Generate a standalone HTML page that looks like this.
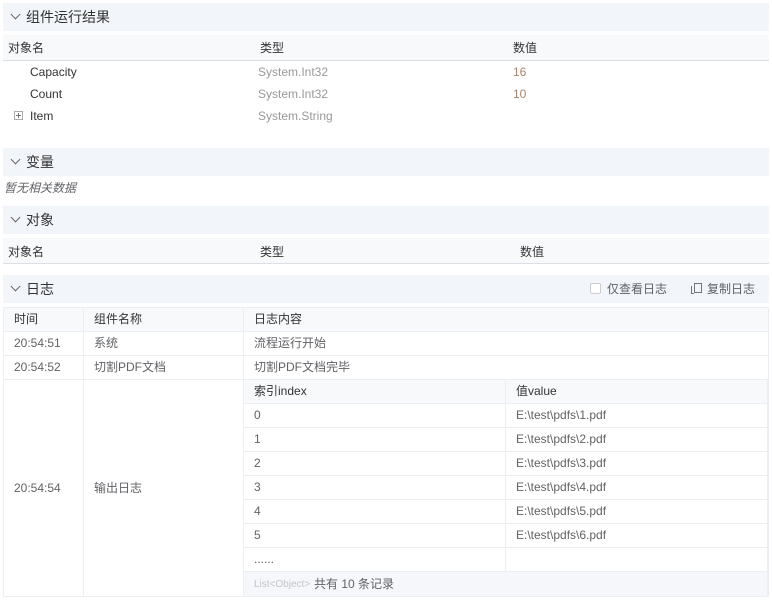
<!DOCTYPE html>
<html><head><meta charset="utf-8"><style>
*{margin:0;padding:0;box-sizing:border-box}
body{width:772px;height:601px;background:#fff;font-family:"Liberation Sans","Noto Sans CJK SC",sans-serif;font-size:12px;color:#333;position:relative;overflow:hidden}
.a{position:absolute;white-space:nowrap;line-height:14px}
.hd{position:absolute;left:3px;width:766px;height:28px;background:#f2f5fa}
.hd span{position:absolute;left:23px;top:6px;font-size:14px;color:#333;line-height:16px}
.hd i{position:absolute;left:9px;top:8px;width:7px;height:7px;border-right:1px solid #666;border-bottom:1px solid #666;transform:rotate(45deg)}
.th{position:absolute;left:3px;width:766px;height:26px;background:#f7f9fa;border-bottom:1px solid #dcdfe6}
.g{color:#999}.b{color:#a3866e}.c{color:#606266}
.bx{position:absolute;border:1px solid #ebeef5}
.hl{position:absolute;height:1px;background:#ebeef5}
.vl{position:absolute;width:1px;background:#ebeef5}
</style></head><body>
<div class="hd" style="top:3px"><i></i><span>组件运行结果</span></div>
<div class="th" style="top:35px"></div>
<div class="a" style="left:8px;top:41px">对象名</div>
<div class="a" style="left:260px;top:41px">类型</div>
<div class="a" style="left:513px;top:41px">数值</div>
<div class="a" style="left:30px;top:65px">Capacity</div>
<div class="a g" style="left:258px;top:65px">System.Int32</div>
<div class="a b" style="left:513px;top:65px">16</div>
<div class="a" style="left:30px;top:87px">Count</div>
<div class="a g" style="left:258px;top:87px">System.Int32</div>
<div class="a b" style="left:513px;top:87px">10</div>
<div style="position:absolute;left:14px;top:111px;width:9px;height:9px;border:1px solid #aaa"></div>
<div style="position:absolute;left:16px;top:115px;width:5px;height:1px;background:#777"></div>
<div style="position:absolute;left:18px;top:113px;width:1px;height:5px;background:#777"></div>
<div class="a" style="left:30px;top:109px">Item</div>
<div class="a g" style="left:258px;top:109px">System.String</div>

<div class="hd" style="top:148px"><i></i><span>变量</span></div>
<div class="a c" style="left:4px;top:181px;font-style:italic">暂无相关数据</div>

<div class="hd" style="top:206px"><i></i><span>对象</span></div>
<div class="th" style="top:238px"></div>
<div class="a" style="left:8px;top:245px">对象名</div>
<div class="a" style="left:260px;top:245px">类型</div>
<div class="a" style="left:520px;top:245px">数值</div>

<div class="hd" style="top:275px"><i></i><span>日志</span></div>
<div style="position:absolute;left:590px;top:283px;width:11px;height:11px;border:1px solid #ccc;background:#fff;border-radius:2px"></div>
<div class="a c" style="left:607px;top:282px">仅查看日志</div>
<div style="position:absolute;left:694px;top:283px;width:8px;height:10px;border:1px solid #777"></div>
<div style="position:absolute;left:691px;top:286px;width:3px;height:8px;border-left:1px solid #777;border-bottom:1px solid #777"></div>
<div class="a c" style="left:707px;top:282px">复制日志</div>

<div class="bx" style="left:3px;top:307px;width:766px;height:290px"></div>
<div style="position:absolute;left:4px;top:308px;width:764px;height:23px;background:#f7f9fa"></div>
<div class="vl" style="left:83px;top:307px;height:290px"></div>
<div class="vl" style="left:243px;top:307px;height:290px"></div>
<div class="hl" style="left:3px;top:331px;width:766px"></div>
<div class="hl" style="left:3px;top:355px;width:766px"></div>
<div class="hl" style="left:3px;top:379px;width:766px"></div>
<div class="a" style="left:14px;top:312px">时间</div>
<div class="a" style="left:94px;top:312px">组件名称</div>
<div class="a" style="left:254px;top:312px">日志内容</div>
<div class="a c" style="left:14px;top:336px">20:54:51</div>
<div class="a c" style="left:94px;top:336px">系统</div>
<div class="a c" style="left:254px;top:336px">流程运行开始</div>
<div class="a c" style="left:14px;top:360px">20:54:52</div>
<div class="a c" style="left:94px;top:360px">切割PDF文档</div>
<div class="a c" style="left:254px;top:360px">切割PDF文档完毕</div>
<div class="a c" style="left:14px;top:481px">20:54:54</div>
<div class="a c" style="left:94px;top:481px">输出日志</div>

<div style="position:absolute;left:244px;top:380px;width:523px;height:23px;background:#f7f9fa"></div>
<div style="position:absolute;left:244px;top:572px;width:523px;height:24px;background:#f5f7fa"></div>
<div class="vl" style="left:767px;top:379px;height:217px"></div>
<div class="vl" style="left:505px;top:379px;height:193px"></div>
<div class="hl" style="left:243px;top:403px;width:525px"></div>
<div class="hl" style="left:243px;top:427px;width:525px"></div>
<div class="hl" style="left:243px;top:451px;width:525px"></div>
<div class="hl" style="left:243px;top:475px;width:525px"></div>
<div class="hl" style="left:243px;top:499px;width:525px"></div>
<div class="hl" style="left:243px;top:523px;width:525px"></div>
<div class="hl" style="left:243px;top:547px;width:525px"></div>
<div class="hl" style="left:243px;top:571px;width:525px"></div>
<div class="a" style="left:254px;top:384px">索引index</div>
<div class="a" style="left:516px;top:384px">值value</div>
<div class="a c" style="left:254px;top:408px">0</div><div class="a c" style="left:516px;top:408px">E:\test\pdfs\1.pdf</div>
<div class="a c" style="left:254px;top:432px">1</div><div class="a c" style="left:516px;top:432px">E:\test\pdfs\2.pdf</div>
<div class="a c" style="left:254px;top:456px">2</div><div class="a c" style="left:516px;top:456px">E:\test\pdfs\3.pdf</div>
<div class="a c" style="left:254px;top:480px">3</div><div class="a c" style="left:516px;top:480px">E:\test\pdfs\4.pdf</div>
<div class="a c" style="left:254px;top:504px">4</div><div class="a c" style="left:516px;top:504px">E:\test\pdfs\5.pdf</div>
<div class="a c" style="left:254px;top:528px">5</div><div class="a c" style="left:516px;top:528px">E:\test\pdfs\6.pdf</div>
<div class="a c" style="left:254px;top:552px">......</div>
<div class="a" style="left:254px;top:578px;font-size:10px;color:#c0c4cc">List&lt;Object&gt;</div>
<div class="a c" style="left:314px;top:577px">共有 10 条记录</div>
</body></html>
